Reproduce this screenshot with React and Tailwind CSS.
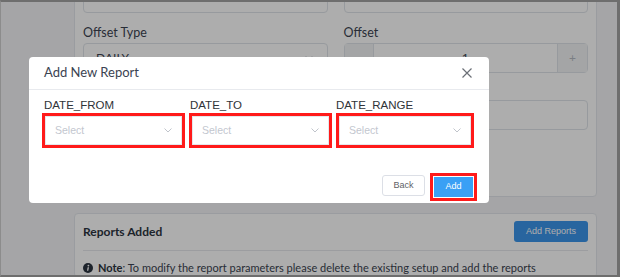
import { ChevronDown } from 'lucide-react';

const LABELS = [
  { text: 'DATE_FROM',  w: 'w-[143px]', ml: 'pl-[2px]' },
  { text: 'DATE_TO',    w: 'w-[143px]', ml: 'pl-[1px]' },
  { text: 'DATE_RANGE', w: 'w-[138px]', ml: 'pl-0' },
];

export default function App() {
  return (
    <div className="w-[620px] h-[277px] box-border border-t-2 border-r-[3px] border-b-2 border-l border-t-[#6e6e6e] border-r-[#6e6e6e] border-b-[#6e6e6e] border-l-[#8c8c8c] overflow-hidden">
      <div className="relative flow-root w-full h-full bg-[#f3f4f6] font-['Lato',sans-serif] text-[#3b4351]">
        {/* Page behind the dialog */}
        <div className="pl-[73px] w-[596px] flex flex-col">
          <div className="-mt-[32px] bg-white border border-[#e3e6ec] rounded-[4px] px-2 pt-[7px] pb-[66px]">
            <div className="grid grid-cols-2 gap-x-4">
              <div className="h-[35px] border border-[#dfe3e9] rounded-[4px] flex items-end pb-[24px] px-3 gap-2 text-[12px]">
                <span className="w-[10px] h-[10px] border border-[#c9ced6] rounded-[2px]" />
                <span>Sup Sel Stat</span>
              </div>
              <div className="h-[35px] border border-[#dfe3e9] rounded-[4px]" />

              <div className="mt-[12px] flex flex-col">
                <span className="text-[12.5px] leading-[16px] mb-[2px]">Offset Type</span>
                <div className="h-[30px] border border-[#dfe3e9] rounded-[4px] flex items-center justify-between px-3 text-[12px]">
                  <span>DAILY</span>
                  <ChevronDown size={12} strokeWidth={1.5} className="text-[#b5bac2]" />
                </div>
              </div>
              <div className="mt-[12px] flex flex-col">
                <span className="text-[12.5px] leading-[16px] mb-[2px]">Offset</span>
                <div className="h-[30px] border border-[#dfe3e9] rounded-[4px] flex text-[12px]">
                  <div className="w-[29px] bg-[#f2f3f5] border-r border-[#dfe3e9] flex items-center justify-center text-[#b5bac2]">−</div>
                  <div className="flex-1 flex items-center justify-center">1</div>
                  <div className="w-[30px] bg-[#f2f3f5] border-l border-[#dfe3e9] flex items-center justify-center text-[#b5bac2]">+</div>
                </div>
              </div>

              <div className="mt-[27px] flex flex-col">
                <div className="h-[30px] border border-[#dfe3e9] rounded-[4px]" />
              </div>
              <div className="mt-[27px] flex flex-col">
                <div className="h-[30px] border border-[#dfe3e9] rounded-[4px]" />
              </div>
            </div>
          </div>

          <div className="mt-4 bg-white border border-[#e3e6ec] rounded-[4px] px-2 pt-[7px]">
            <div className="flex items-center justify-between pb-[8px] border-b border-[#e6e8ec]">
              <span className="font-bold text-[12px] text-[#2c3440]">Reports Added</span>
              <button className="w-[74px] h-[21px] rounded-[3px] bg-[#3b95ea] text-white text-[9px] font-['Liberation_Sans',sans-serif]">
                Add Reports
              </button>
            </div>
            <div className="flex items-center gap-[5px] pt-[9px] text-[11px] text-[#3b4351]">
              <svg width="10" height="10" viewBox="0 0 10 10" className="shrink-0">
                <circle cx="5" cy="5" r="5" fill="#2c3440" />
                <circle cx="5.4" cy="2.6" r="0.9" fill="#fff" />
                <path d="M4.6 4.2 h1.4 l-0.7 3.6 h-1.3 z" fill="#fff" />
              </svg>
              <span><b className="text-[#2c3440]">Note</b>: To modify the report parameters please delete the existing setup and add the reports</span>
            </div>
          </div>
        </div>

        {/* Overlay */}
        <div className="absolute inset-0 bg-black/[0.32]" />

        {/* Dialog */}
        <div className="absolute left-[28px] top-[55px] w-[460px] h-[146px] bg-white rounded-[4px] flex flex-col">
          <div className="h-[33px] shrink-0 border-b border-[#e8eaee] flex items-center justify-between pl-[15px] pr-[17px]">
            <span className="text-[13px] text-[#3b4351]">Add New Report</span>
            <svg width="10" height="10" viewBox="0 0 10 10">
              <path d="M0.5 0.5 L9.5 9.5 M9.5 0.5 L0.5 9.5" stroke="#6b6f76" strokeWidth="1.2" />
            </svg>
          </div>

          <div className="flex gap-[4px] pl-[13px] pt-[8px] font-['Liberation_Sans',sans-serif]">
            {LABELS.map((l) => (
              <div key={l.text} className={`${l.w} flex flex-col`}>
                <span className={`${l.ml} text-[11.5px] leading-[15px] text-[#2f3338]`}>{l.text}</span>
                <div className="h-[35px] border-[3px] border-[#ff1a1a]">
                  <div className="h-full border border-[#e4e7ec] bg-white flex items-center justify-between pl-[9px] pr-[9px]">
                    <span className="text-[10.5px] text-[#c3c7cf]">Select</span>
                    <svg width="8" height="5" viewBox="0 0 8 5">
                      <path d="M0.5 0.5 L4 4 L7.5 0.5" fill="none" stroke="#b9bdc5" strokeWidth="0.9" />
                    </svg>
                  </div>
                </div>
              </div>
            ))}
          </div>

          <div className="mt-[25px] flex justify-end items-start gap-[5px] pr-[12px] font-['Liberation_Sans',sans-serif]">
            <button className="mt-[2px] w-[43px] h-[21px] border border-[#dcdfe6] rounded-[3px] bg-white text-[9px] text-[#606266]">
              Back
            </button>
            <div className="border-[3px] border-[#ff1a1a] p-[1px]">
              <button className="block w-[39px] h-[20px] bg-[#3aa0f5] text-white text-[9px]">Add</button>
            </div>
          </div>
        </div>
      </div>
    </div>
  );
}
